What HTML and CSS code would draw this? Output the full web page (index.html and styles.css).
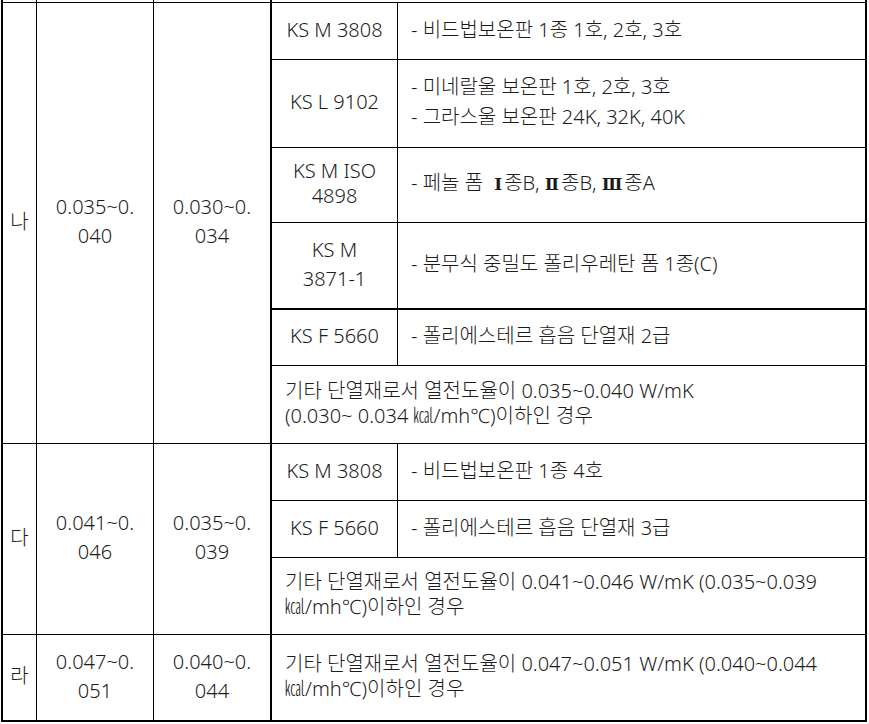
FILE: index.html
```html
<!DOCTYPE html>
<html lang="ko">
<head>
<meta charset="utf-8">
<title>단열재 등급</title>
<link rel="stylesheet" href="styles.css">
</head>
<body>
<table class="spec">
  <colgroup>
    <col class="c-grade">
    <col class="c-val">
    <col class="c-val2">
    <col class="c-code">
    <col class="c-desc">
  </colgroup>
  <tr class="r-top">
    <td></td><td></td><td class="thick"></td><td colspan="2" class="last"></td>
  </tr>
  <tr class="h57">
    <td rowspan="6" class="grade">나</td>
    <td rowspan="6" class="val">0.035~0.<br>040</td>
    <td rowspan="6" class="val thick">0.030~0.<br>034</td>
    <td class="code">KS M 3808</td>
    <td class="desc last">- 비드법보온판 1종 1호, 2호, 3호</td>
  </tr>
  <tr class="h88">
    <td class="code">KS L 9102</td>
    <td class="desc last lh30">- 미네랄울 보온판 1호, 2호, 3호<br>- 그라스울 보온판 24K, 32K, 40K</td>
  </tr>
  <tr class="h75">
    <td class="code lh25">KS M ISO<br>4898</td>
    <td class="desc last">- 페놀 폼 <span class="roman first">Ⅰ</span>종B, <span class="roman">Ⅱ</span>종B, <span class="roman">Ⅲ</span>종A</td>
  </tr>
  <tr class="h87 sep">
    <td class="code">KS M<br>3871-1</td>
    <td class="desc last">- 분무식 중밀도 폴리우레탄 폼 1종(C)</td>
  </tr>
  <tr class="h56">
    <td class="code">KS F 5660</td>
    <td class="desc last">- 폴리에스테르 흡음 단열재 2급</td>
  </tr>
  <tr class="h78">
    <td colspan="2" class="desc last lh25">기타 단열재로서 열전도율이 0.035~0.040 W/mK<br>(0.030~ 0.034 ㎉/mh℃)이하인 경우</td>
  </tr>
  <tr class="h57">
    <td rowspan="3" class="grade">다</td>
    <td rowspan="3" class="val">0.041~0.<br>046</td>
    <td rowspan="3" class="val thick">0.035~0.<br>039</td>
    <td class="code">KS M 3808</td>
    <td class="desc last">- 비드법보온판 1종 4호</td>
  </tr>
  <tr class="h57">
    <td class="code">KS F 5660</td>
    <td class="desc last">- 폴리에스테르 흡음 단열재 3급</td>
  </tr>
  <tr class="h77">
    <td colspan="2" class="desc last lh25">기타 단열재로서 열전도율이 0.041~0.046 W/mK (0.035~0.039<br>㎉/mh℃)이하인 경우</td>
  </tr>
  <tr class="h87 bottom">
    <td class="grade">라</td>
    <td class="val">0.047~0.<br>051</td>
    <td class="val thick">0.040~0.<br>044</td>
    <td colspan="2" class="desc last lh25">기타 단열재로서 열전도율이 0.047~0.051 W/mK (0.040~0.044<br>㎉/mh℃)이하인 경우</td>
  </tr>
</table>
</body>
</html>
```

FILE: styles.css
```css
html, body {
  margin: 0;
  padding: 0;
  background: #ffffff;
}

body {
  padding-left: 1px;
  font-family: "Noto Sans", "Noto Sans CJK KR", sans-serif;
  font-size: 20px;
  font-weight: 300;
  color: #1c1c1c;
}

.spec {
  table-layout: fixed;
  border-collapse: separate;
  border-spacing: 0;
  width: 866px;
  border-left: 2px solid #000;
}

.c-grade { width: 34px; }
.c-val { width: 117px; }
.c-val2 { width: 118px; }
.c-code { width: 126px; }
.c-desc { width: 469px; }

.spec td {
  box-sizing: border-box;
  padding: 0 0 4px 0;
  border-right: 1px solid #000;
  border-bottom: 1px solid #000;
  vertical-align: middle;
  line-height: 29px;
  white-space: nowrap;
}

.spec td.thick { border-right-width: 2px; }
.spec td.last { border-right-width: 2px; }

.spec .r-top td { height: 3px; padding: 0; line-height: 0; font-size: 0; }

.h56 { height: 56px; }
.h57 { height: 57px; }
.h75 { height: 75px; }
.h77 { height: 77px; }
.h78 { height: 78px; }
.h87 { height: 87px; }
.h88 { height: 88px; }

.sep td { border-bottom-width: 2px; }
.bottom td { border-bottom-width: 2px; }

.grade, .val, .code { text-align: center; }

.spec td.desc {
  text-align: left;
  padding-left: 13px;
}

.spec td.lh25 { line-height: 25px; }
.spec td.lh30 { line-height: 30px; }

.roman {
  font-family: "DejaVu Serif", "Noto Sans CJK KR", serif;
  font-weight: 700;
  font-size: 17px;
  margin-right: 2px;
}

.roman.first { margin-left: 6px; }
```
